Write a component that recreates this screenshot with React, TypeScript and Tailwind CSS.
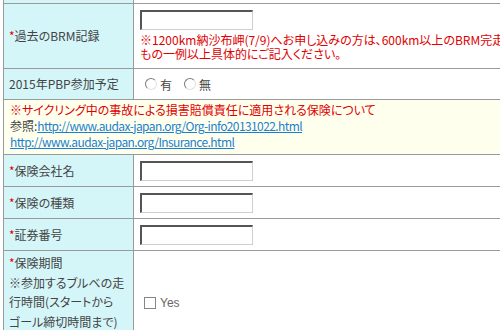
const font = { fontFamily: '"Noto Sans CJK JP", "Noto Sans", sans-serif' }

function Req() {
  return <span className="text-[#e00000]">*</span>
}

function TextInput() {
  return (
    <div className="w-[113px] h-[20px] bg-white border-t-2 border-l-2 border-b border-r border-t-[#555] border-l-[#555] border-b-[#cfcfcf] border-r-[#cfcfcf]" />
  )
}

function Radio({ label }: { label: string }) {
  return (
    <label className="flex items-center gap-[3px] mr-[12px]">
      <span className="w-[12px] h-[12px] rounded-full bg-white border border-t-[#7a7a7a] border-l-[#7a7a7a] border-r-[#e2e2e2] border-b-[#e2e2e2]" />
      <span className="mt-[2px]">{label}</span>
    </label>
  )
}

function Row({
  label,
  h,
  children,
}: {
  label: React.ReactNode
  h: string
  children: React.ReactNode
}) {
  return (
    <div className={`flex border-t border-[#9a9a9a] ${h}`}>
      <div className="w-[130px] shrink-0 bg-[#d5f6f9] border-r border-[#9a9a9a] pl-[5px] flex items-center">
        {label}
      </div>
      <div className="flex-1 pl-[6px] flex items-center">{children}</div>
    </div>
  )
}

export default function App() {
  return (
    <div
      className="w-[500px] h-[330px] overflow-hidden bg-white text-[12px] text-[#444] [font-feature-settings:'palt']"
      style={font}
    >
      <div className="ml-[3px] w-[720px] border-l border-[#9a9a9a]">
        {/* 上の行の切れ端 */}
        <div className="flex h-[3px]">
          <div className="w-[130px] shrink-0 bg-[#d5f6f9] border-r border-[#9a9a9a]" />
          <div className="flex-1" />
        </div>

        {/* 過去のBRM記録 */}
        <div className="flex border-t border-[#9a9a9a] h-[65px]">
          <div className="w-[130px] shrink-0 bg-[#d5f6f9] border-r border-[#9a9a9a] pl-[5px] flex items-center">
            <span>
              <Req />過去のBRM記録
            </span>
          </div>
          <div className="flex-1 pl-[6px] pt-[6px]">
            <TextInput />
            <div className="mt-[3px] leading-[14px] text-[#e00000] whitespace-nowrap">
              ※1200km納沙布岬(7/9)へお申し込みの方は、600km以上のBRM完走実績のある
              <br />
              もの一例以上具体的にご記入ください。
            </div>
          </div>
        </div>

        {/* PBP */}
        <Row label="2015年PBP参加予定" h="h-[31px]">
          <div className="flex items-center pl-[5px]">
            <Radio label="有" />
            <Radio label="無" />
          </div>
        </Row>

        {/* 保険についての注意 */}
        <div className="border-t border-[#9a9a9a] h-[55px] bg-[#ffffee] pl-[6px] pt-[2px] leading-[16px]">
          <div className="text-[#e00000]">※サイクリング中の事故による損害賠償責任に適用される保険について</div>
          <div>
            参照:
            <a className="text-[#1c7fd0] underline tracking-[-0.6px]" href="#">
              http://www.audax-japan.org/Org-info20131022.html
            </a>
          </div>
          <div>
            <a className="text-[#1c7fd0] underline tracking-[-0.6px]" href="#">
              http://www.audax-japan.org/Insurance.html
            </a>
          </div>
        </div>

        <Row label={<span><Req />保険会社名</span>} h="h-[32px]">
          <TextInput />
        </Row>
        <Row label={<span><Req />保険の種類</span>} h="h-[32px]">
          <TextInput />
        </Row>
        <Row label={<span><Req />証券番号</span>} h="h-[32px]">
          <TextInput />
        </Row>

        {/* 保険期間 */}
        <div className="flex border-t border-[#9a9a9a]">
          <div className="w-[130px] shrink-0 bg-[#d5f6f9] border-r border-[#9a9a9a] pl-[5px] pt-[2px] pb-[4px] leading-[19.5px]">
            <div><Req />保険期間</div>
            <div>※参加するブルベの走</div>
            <div>行時間(スタートから</div>
            <div>ゴール締切時間まで)</div>
            <div>はこの保険期間内です</div>
          </div>
          <div className="flex-1 pl-[10px] flex items-center">
            <span className="w-[12px] h-[12px] bg-white border border-[#858585]" />
            <span className="ml-[4px] text-[#666]" style={{ fontFamily: '"Liberation Sans", Arial, sans-serif' }}>Yes</span>
          </div>
        </div>
      </div>
    </div>
  )
}
